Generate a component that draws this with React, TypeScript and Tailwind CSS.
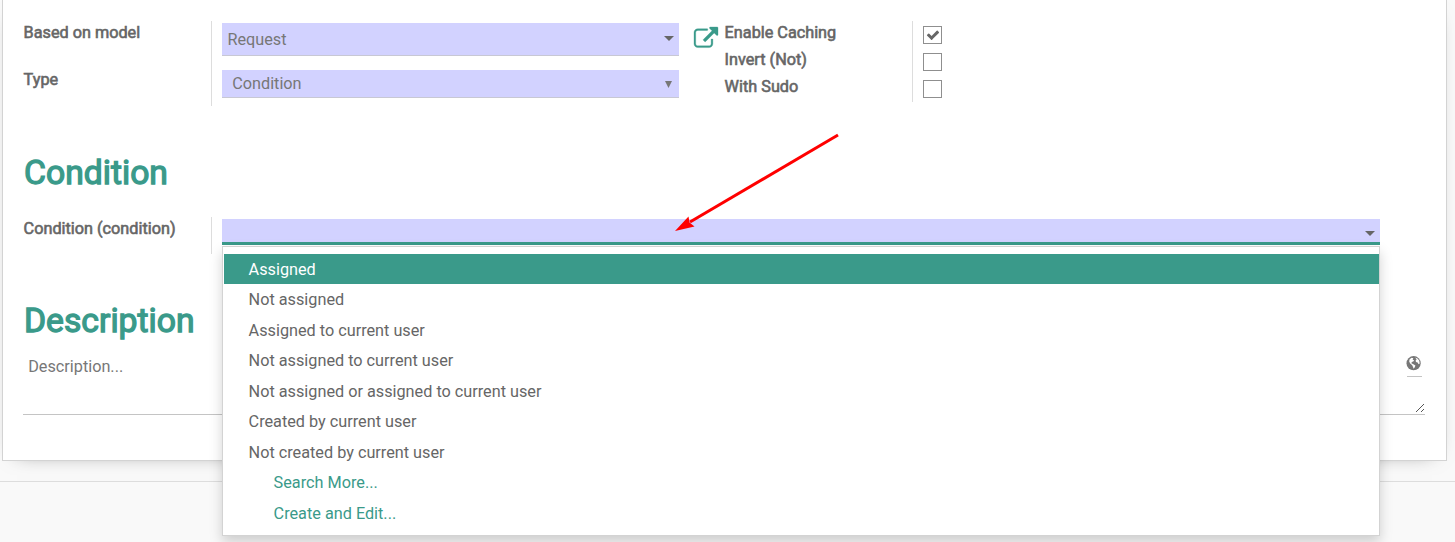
import type { ReactNode } from "react";

const OPTIONS = [
  "Assigned",
  "Not assigned",
  "Assigned to current user",
  "Not assigned to current user",
  "Not assigned or assigned to current user",
  "Created by current user",
  "Not created by current user",
];

const ACTIONS = ["Search More...", "Create and Edit..."];

const FLAGS = [
  { label: "Enable Caching", checked: true },
  { label: "Invert (Not)", checked: false },
  { label: "With Sudo", checked: false },
];

function Label({ children }: { children: ReactNode }) {
  return <span className="block leading-6 whitespace-nowrap [-webkit-text-stroke:0.6px_#666666]">{children}</span>;
}

function Heading({ children }: { children: ReactNode }) {
  return (
    <h2 className="h-10 text-[33.7px] leading-10 whitespace-nowrap text-[#3a9a8a] [-webkit-text-stroke:1.3px_#3a9a8a]">
      {children}
    </h2>
  );
}

function Caret() {
  return (
    <svg className="h-[5px] w-[10px]" viewBox="0 0 10 5">
      <path d="M0 0h10L5 5z" fill="#666" />
    </svg>
  );
}

function ExternalLink() {
  return (
    <svg className="h-6 w-6 overflow-visible" viewBox="0 0 1792 1792" fill="#3a9a8a" stroke="#3a9a8a" strokeWidth="24">
      <path d="M1408 928v320q0 119-84.500 203.500t-203.500 84.500h-832q-119 0-203.500-84.500t-84.500-203.500v-832q0-119 84.500-203.500t203.500-84.500h704q14 0 23 9t9 23v64q0 14-9 23t-23 9h-704q-66 0-113 47t-47 113v832q0 66 47 113t113 47h832q66 0 113-47t47-113v-320q0-14 9-23t23-9h64q14 0 23 9t9 23zm384-864v512q0 26-19 45t-45 19-45-19l-176-176-652 652q-10 10-23 10t-23-10l-114-114q-10-10-10-23t10-23l652-652-176-176q-19-19-19-45t19-45 45-19h512q26 0 45 19t19 45z" />
    </svg>
  );
}

function Globe() {
  return (
    <svg className="h-[15px] w-[15px] overflow-visible" viewBox="0 0 15 15">
      <circle cx="6.600" cy="7.200" r="7.100" fill="#777" />
      <path
        d="M2.600 3.200L4.600 1.800L6.400 2.200L5.600 3.400L7.200 4.400L6.200 5.400L4.800 6L4.400 7.200L6.400 8.200L8.400 9.600L7.800 11.200L6.600 12.800L6 11L5.200 9.200L3.200 7.600L2.200 5.600ZM8.200 1.600L10.400 2.400L12.200 4.600L12.700 7.400L11.600 8.200L10.600 6.600L9 6L8.600 4.400L9.600 3.400Z"
        fill="#fff"
      />
    </svg>
  );
}

function Checkbox({ checked }: { checked: boolean }) {
  return (
    <span className="flex h-[18px] w-[19px] items-center justify-center border border-[#8f8f8f] bg-white">
      {checked && (
        <svg className="h-[14px] w-[14px]" viewBox="0 0 1792 1792" fill="#666">
          <path d="M1671 566q0 40-28 68l-724 724-136 136q-28 28-68 28t-68-28l-136-136-362-362q-28-28-28-68t28-68l136-136q28-28 68-28t68 28l294 295 656-657q28-28 68-28t68 28l136 136q28 28 28 68z" />
        </svg>
      )}
    </span>
  );
}

function Menu() {
  return (
    <ul className="absolute top-[27px] left-0 z-10 h-[290px] w-[1158px] border border-[#d3d3d3] bg-white pt-[6.6px] pl-px shadow-[0_6px_12px_rgba(0,0,0,0.175)]">
      {OPTIONS.map((text, i) => (
        <li
          key={text}
          className={
            i === 0
              ? "h-[30.5px] bg-[#3a9a8a] pl-[24.6px] leading-[32.4px] text-white"
              : "h-[30.5px] pl-[24.6px] leading-[32.4px]"
          }
        >
          {text}
        </li>
      ))}
      {ACTIONS.map((text) => (
        <li key={text} className="h-[30.5px] pl-[49.6px] leading-[32.4px] text-[#3a9a8a]">
          {text}
        </li>
      ))}
    </ul>
  );
}

export default function App() {
  return (
    <div className="relative h-[542px] w-[1455px] overflow-hidden bg-[#f9f9f9] font-['Roboto',sans-serif] text-[16.24px] text-[#666666]">
      <div className="h-[482px] border-b border-[#dddddd] pl-[2px]">
        <main className="h-[461px] w-[1445px] border-x border-b border-[#d3d3d3] bg-white pl-[20px] shadow-[0_5px_20px_-15px_rgba(0,0,0,0.6)]">
          <section className="flex h-[131px] pt-[21px]">
            <div className="w-[188px] pl-[0.6px]">
              <Label>Based on model</Label>
              <div className="pt-[23px]">
                <Label>Type</Label>
              </div>
            </div>
            <div className="h-[85px] w-[468px] border-l border-[#dddddd] pt-[2px] pl-[10px]">
              <div className="flex h-[33px] justify-between border-b border-[#c8c8d4] bg-[#d2d2ff] pr-[5px] pl-[5.4px] text-[#777777]">
                <span className="pt-[5px] leading-6">Request</span>
                <span className="flex pt-[13px]">
                  <Caret />
                </span>
              </div>
              <div className="mt-[14px] flex h-[28px] justify-between border-b border-[#c8c8d4] bg-[#d2d2ff] pr-[7px] pl-[10.2px] text-[#777777]">
                <span className="pt-[2px] leading-6">Condition</span>
                <svg className="mt-[11px] h-[7px] w-[7px]" viewBox="0 0 7 7">
                  <path d="M0 0h7L3.500 7z" fill="#777" />
                </svg>
              </div>
            </div>
            <div className="w-[46px] pt-[6.4px] pl-[15.3px]">
              <ExternalLink />
            </div>
            <div className="w-[187px]">
              {FLAGS.map((f) => (
                <div key={f.label} className="-ml-[0.4px] h-[27px]">
                  <Label>{f.label}</Label>
                </div>
              ))}
            </div>
            <div className="h-[81px] border-l border-[#dddddd] pt-[5px] pl-[10px]">
              {FLAGS.map((f) => (
                <div key={f.label} className="h-[27px]">
                  <Checkbox checked={f.checked} />
                </div>
              ))}
            </div>
          </section>

          <section className="pt-[22px] pl-px">
            <Heading>Condition</Heading>
            <div className="flex h-[61px] pt-[24px]">
              <div className="w-[187px]">
                <div className="-ml-[0.4px]">
                  <Label>Condition (condition)</Label>
                </div>
              </div>
              <div className="h-[37px] border-l border-[#dddddd] pt-[2px] pl-[10px]">
                <div className="relative h-[26px] w-[1158px] border-b-[3px] border-[#3a9a8a] bg-[#d2d2ff]">
                  <div className="flex justify-end pt-[12px] pr-[5px]">
                    <Caret />
                  </div>
                  <Menu />
                </div>
              </div>
            </div>
          </section>

          <section className="pt-[47px]">
            <div className="pl-px">
              <Heading>Description</Heading>
            </div>
            <div className="mt-[12px] flex h-[62px] w-[1402px] justify-between border-b border-[#c4c4c4] pr-[3px] pl-[5.2px]">
              <span className="pt-[2px] leading-6 text-[#777777]">Description...</span>
              <span className="flex h-[24px] w-[15px] flex-col border-b border-[#c4c4c4] pt-[3px]">
                <Globe />
              </span>
            </div>
          </section>
        </main>
      </div>

      <svg className="pointer-events-none absolute top-[400px] left-[1414px] h-3 w-3" viewBox="0 0 12 12">
        <path d="M2 12L10 4M7 12l3-3" stroke="#555" fill="none" />
      </svg>
      <svg className="pointer-events-none absolute top-0 left-0 z-20 h-[542px] w-[1455px]" viewBox="0 0 1455 542">
        <path d="M838 135L690 222" stroke="#ff0000" strokeWidth="3" />
        <path d="M675 231L688.500 216.500L689.500 222.500L694.500 226.500Z" fill="#ff0000" />
      </svg>
    </div>
  );
}
